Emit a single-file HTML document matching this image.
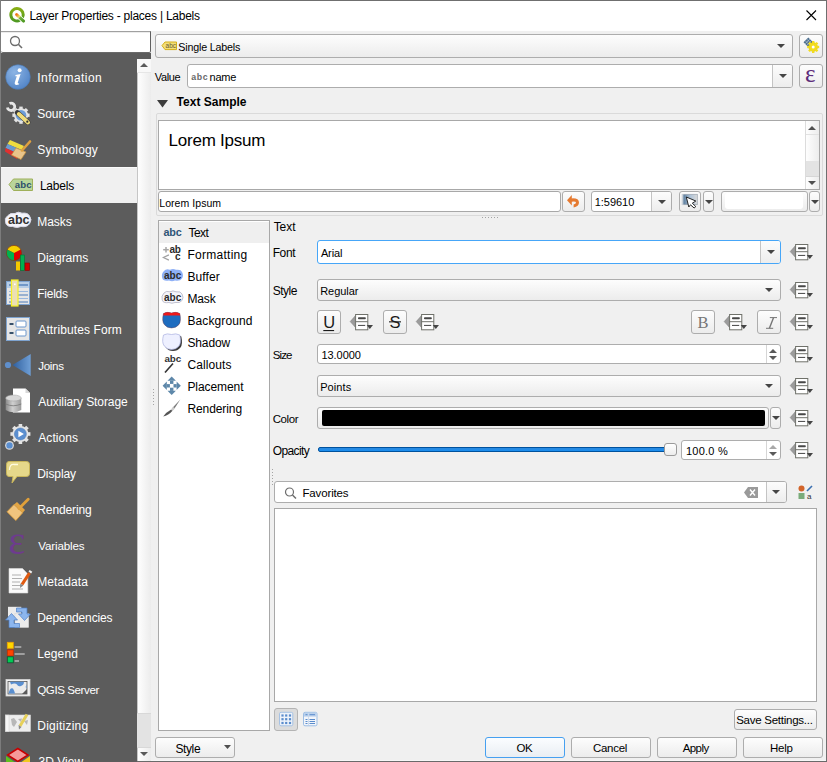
<!DOCTYPE html>
<html><head><meta charset="utf-8"><style>
html,body{margin:0;padding:0;}
body{width:827px;height:762px;position:relative;overflow:hidden;font-family:"Liberation Sans",sans-serif;background:#f0f0f0;}
.b{position:absolute;box-sizing:border-box;}
.t{position:absolute;line-height:1;white-space:nowrap;}
svg.b{overflow:visible;}
</style></head><body>
<div class="b" style="left:0px;top:0px;width:827px;height:762px;background:#f0f0f0;"></div>
<div class="b" style="left:0px;top:0px;width:827px;height:1px;background:#6f6f6f;"></div>
<div class="b" style="left:0px;top:0px;width:1px;height:762px;background:#7c7c7c;"></div>
<div class="b" style="left:826px;top:0px;width:1px;height:762px;background:#6f6f6f;"></div>
<div class="b" style="left:0px;top:761px;width:827px;height:1px;background:#6a6a6a;"></div>
<div class="b" style="left:1px;top:1px;width:825px;height:30px;background:#fff;"></div>
<svg class="b" style="left:6px;top:5px;" width="24" height="22" viewBox="0 0 24 22"><defs><linearGradient id="qg" x1="0" y1="0" x2="0" y2="1"><stop offset="0" stop-color="#86ad14"/><stop offset="1" stop-color="#4f9a22"/></linearGradient><linearGradient id="qt" x1="0" y1="0" x2="1" y2="1"><stop offset="0" stop-color="#f07818"/><stop offset="0.35" stop-color="#e8e070"/><stop offset="0.5" stop-color="#70b040"/><stop offset="1" stop-color="#4f9a22"/></linearGradient></defs><path d="M13.9 15.2 A6.2 6.2 0 1 1 16.4 12.8" fill="none" stroke="url(#qg)" stroke-width="3"/><line x1="12" y1="11" x2="17.6" y2="16.1" stroke="#fff" stroke-width="4.4" stroke-linecap="round"/><line x1="10.6" y1="9.6" x2="17.6" y2="16.1" stroke="url(#qt)" stroke-width="3" stroke-linecap="round"/></svg>
<div class="t" style="left:29.40px;top:9.94px;font-size:12px;color:#000;font-weight:normal;letter-spacing:-0.239px;">Layer Properties - places | Labels</div>
<svg class="b" style="left:806px;top:10px;" width="11" height="11" viewBox="0 0 11 11"><path d="M0.5 0.5 L10 10 M10 0.5 L0.5 10" stroke="#000" stroke-width="1.1"/></svg>
<div class="b" style="left:1px;top:31px;width:150px;height:22px;background:#fff;border-top:1px solid #a0a0a0;border-right:1px solid #606060;border-bottom:1px solid #6a6a6a;border-radius:0 0 2px 2px;"></div>
<div class="b" style="left:1px;top:32px;width:149px;height:1px;background:#ececec;"></div>
<svg class="b" style="left:8.6px;top:34.8px;" width="14" height="14" viewBox="0 0 14 14"><circle cx="6" cy="6" r="4.5" fill="none" stroke="#6d6d6d" stroke-width="1.3"/><line x1="9.3" y1="9.3" x2="13" y2="13" stroke="#6d6d6d" stroke-width="1.6"/></svg>
<div class="b" style="left:1px;top:53px;width:150px;height:709px;background:#5c5c5c;"></div>
<div class="b" style="left:137px;top:59px;width:14px;height:702px;background:linear-gradient(90deg,#fefefe,#ececec);border-left:1px solid #c6c6c6;"></div>
<div class="b" style="left:137px;top:59px;width:14px;height:14px;background:#f8f8f8;border-bottom:1px solid #e6e6e6;"></div>
<svg class="b" style="left:140.0px;top:63.0px;" width="8" height="4" viewBox="0 0 8 4"><polygon points="0,4 8,4 4.0,0" fill="#5a5a5a"/></svg>
<div class="b" style="left:137px;top:713px;width:14px;height:35px;background:#e3e3e3;border-top:1px solid #d8d8d8;border-bottom:1px solid #d8d8d8;"></div>
<svg class="b" style="left:140.0px;top:752.0px;" width="8" height="4" viewBox="0 0 8 4"><polygon points="0,0 8,0 4.0,4" fill="#5a5a5a"/></svg>
<div class="t" style="left:37.30px;top:71.64px;font-size:12px;color:#fff;font-weight:normal;letter-spacing:0.440px;">Information</div>
<div class="t" style="left:37.30px;top:107.64px;font-size:12px;color:#fff;font-weight:normal;letter-spacing:-0.080px;">Source</div>
<div class="t" style="left:37.30px;top:143.64px;font-size:12px;color:#fff;font-weight:normal;letter-spacing:0.138px;">Symbology</div>
<div class="b" style="left:1px;top:167px;width:136px;height:36px;background:#f0f0f0;border-top:1px solid #fafafa;"></div>
<div class="t" style="left:39.90px;top:179.64px;font-size:12px;color:#000;font-weight:normal;letter-spacing:-0.200px;">Labels</div>
<div class="t" style="left:37.30px;top:215.64px;font-size:12px;color:#fff;font-weight:normal;letter-spacing:-0.075px;">Masks</div>
<div class="t" style="left:37.30px;top:251.64px;font-size:12px;color:#fff;font-weight:normal;letter-spacing:-0.071px;">Diagrams</div>
<div class="t" style="left:37.30px;top:287.64px;font-size:12px;color:#fff;font-weight:normal;letter-spacing:-0.280px;">Fields</div>
<div class="t" style="left:38.30px;top:323.64px;font-size:12px;color:#fff;font-weight:normal;letter-spacing:0.107px;">Attributes Form</div>
<div class="t" style="left:38.30px;top:359.98px;font-size:11.6px;color:#fff;font-weight:normal;letter-spacing:-0.350px;">Joins</div>
<div class="t" style="left:38.30px;top:395.64px;font-size:12px;color:#fff;font-weight:normal;letter-spacing:-0.081px;">Auxiliary Storage</div>
<div class="t" style="left:38.30px;top:431.64px;font-size:12px;color:#fff;font-weight:normal;letter-spacing:0.067px;">Actions</div>
<div class="t" style="left:37.30px;top:467.64px;font-size:12px;color:#fff;font-weight:normal;letter-spacing:-0.100px;">Display</div>
<div class="t" style="left:37.30px;top:503.64px;font-size:12px;color:#fff;font-weight:normal;letter-spacing:-0.112px;">Rendering</div>
<div class="t" style="left:38.30px;top:539.98px;font-size:11.6px;color:#fff;font-weight:normal;letter-spacing:-0.162px;">Variables</div>
<div class="t" style="left:37.30px;top:575.64px;font-size:12px;color:#fff;font-weight:normal;letter-spacing:0.071px;">Metadata</div>
<div class="t" style="left:37.30px;top:611.64px;font-size:12px;color:#fff;font-weight:normal;letter-spacing:-0.127px;">Dependencies</div>
<div class="t" style="left:37.30px;top:647.64px;font-size:12px;color:#fff;font-weight:normal;letter-spacing:0.100px;">Legend</div>
<div class="t" style="left:37.30px;top:683.98px;font-size:11.6px;color:#fff;font-weight:normal;letter-spacing:-0.440px;">QGIS Server</div>
<div class="t" style="left:37.30px;top:719.64px;font-size:12px;color:#fff;font-weight:normal;letter-spacing:0.244px;">Digitizing</div>
<div class="t" style="left:38.60px;top:755.64px;font-size:12px;color:#fff;font-weight:normal;">3D View</div>
<svg class="b" style="left:5px;top:64px;" width="26" height="26" viewBox="0 0 26 26"><defs><radialGradient id="ig" cx="0.35" cy="0.3" r="0.8"><stop offset="0" stop-color="#8cb4e4"/><stop offset="1" stop-color="#4f82c6"/></radialGradient></defs>
    <circle cx="13" cy="13" r="12.3" fill="url(#ig)" stroke="#4a78b4" stroke-width="0.6"/>
    <circle cx="14.6" cy="6.2" r="2" fill="#fff"/>
    <path d="M10.5 11 L15.6 10 L12.8 18.6 Q12.5 19.8 14.2 19.2 L13.8 20.6 Q9 21.8 9.8 18.6 L11.8 12.2 L10.3 12.3 Z" fill="#fff"/></svg>
<svg class="b" style="left:5px;top:101px;" width="27" height="26" viewBox="0 0 27 26"><g transform="translate(16,14.2)">
      <circle r="7" fill="#e4e4e4"/><rect x="-1.7" y="-8.6" width="3.4" height="3" fill="#e4e4e4" transform="rotate(0)"/><rect x="-1.7" y="-8.6" width="3.4" height="3" fill="#e4e4e4" transform="rotate(45)"/><rect x="-1.7" y="-8.6" width="3.4" height="3" fill="#e4e4e4" transform="rotate(90)"/><rect x="-1.7" y="-8.6" width="3.4" height="3" fill="#e4e4e4" transform="rotate(135)"/><rect x="-1.7" y="-8.6" width="3.4" height="3" fill="#e4e4e4" transform="rotate(180)"/><rect x="-1.7" y="-8.6" width="3.4" height="3" fill="#e4e4e4" transform="rotate(225)"/><rect x="-1.7" y="-8.6" width="3.4" height="3" fill="#e4e4e4" transform="rotate(270)"/><rect x="-1.7" y="-8.6" width="3.4" height="3" fill="#e4e4e4" transform="rotate(315)"/>
      <circle r="5.3" fill="#6d9dd8"/></g>
      <path d="M4.5 2.4 A3.7 3.7 0 1 1 2.4 6.4" fill="none" stroke="#e6e6e6" stroke-width="2.8"/>
      <line x1="9" y1="9" x2="12" y2="12" stroke="#d6d6d6" stroke-width="3.4"/>
      <line x1="12.3" y1="11.6" x2="23" y2="21.4" stroke="#3a3a3a" stroke-width="5" stroke-linecap="round"/>
      <line x1="13.8" y1="13" x2="23" y2="21.4" stroke="#f0dc7a" stroke-width="4" stroke-linecap="round"/>
      <circle cx="22.3" cy="20.7" r="1.1" fill="#333"/></svg>
<svg class="b" style="left:4px;top:138px;" width="28" height="23" viewBox="0 0 28 23"><polygon points="6,2 20,8 17.5,12 3.5,6" fill="#f0dc40"/>
      <polygon points="3.5,6 17.5,12 15,16 1.5,10" fill="#6a9ad0"/>
      <polygon points="1.5,10 15,16 13,21 1,13.5" fill="#e03030"/>
      <polygon points="12,10 22,14 17,21.5 7.5,17" fill="#e9c48a" stroke="#c8903a" stroke-width="0.7"/>
      <line x1="18" y1="12.5" x2="26" y2="3.5" stroke="#dfa040" stroke-width="2.6" stroke-linecap="round"/></svg>
<svg class="b" style="left:8px;top:178px;" width="26" height="14" viewBox="0 0 26 14"><path d="M1 6.5 L5.5 1 L24.5 1 L24.5 12.5 L5.5 12.5 Z" fill="#b9d59a" stroke="#9fb05a" stroke-width="1"/>
      <text x="6.8" y="10.2" font-family="Liberation Sans" font-weight="bold" font-size="9.6" fill="#2c4e6c" letter-spacing="0.1">abc</text></svg>
<svg class="b" style="left:4px;top:211px;" width="29" height="18" viewBox="0 0 29 18"><path d="M4 4.5 Q6 1.8 11 2.5 Q14 0 18 2.2 Q24 1.5 25.5 5 Q28.5 8.5 25.5 12.8 Q23 16.5 17 15.5 Q13 17.5 8.5 15.5 Q2.5 16 1.5 11.5 Q0 7 4 4.5 Z" fill="#f4f4fa" stroke="#d8d8e6" stroke-width="1"/>
      <text x="4" y="13.3" font-family="Liberation Sans" font-weight="bold" font-size="12.5" fill="#333">abc</text></svg>
<svg class="b" style="left:5px;top:244px;" width="26" height="28" viewBox="0 0 26 28"><circle cx="9" cy="9" r="7.6" fill="#e00000"/>
      <path d="M9 9 L2.2 5.6 A7.6 7.6 0 0 1 15.8 5.6 Z" fill="#f5d000"/>
      <path d="M9 9 L9 16.6 A7.6 7.6 0 0 1 2.2 5.6 Z" fill="#00b050"/>
      <circle cx="9" cy="9" r="7.6" fill="none" stroke="#7a3a10" stroke-width="0.6"/>
      <rect x="11" y="17.5" width="4" height="9" fill="#f5c800"/>
      <rect x="15.5" y="11" width="4" height="15.5" fill="#00b050" stroke="#087030" stroke-width="0.6"/>
      <rect x="20" y="19" width="4.5" height="7.5" fill="#d00000" stroke="#8a0000" stroke-width="0.6"/></svg>
<svg class="b" style="left:5px;top:279px;" width="26" height="28" viewBox="0 0 26 28"><rect x="1.5" y="2.5" width="23" height="23" fill="#e6e6e6" stroke="#7ea3cf" stroke-width="1"/>
      <rect x="2" y="3" width="22" height="6" fill="#b7cde6"/>
      <line x1="4" y1="6" x2="23" y2="6" stroke="#4a7ab8" stroke-width="1.3"/>
      <line x1="4" y1="12.5" x2="23" y2="12.5" stroke="#9ab8de" stroke-width="1"/>
      <line x1="4" y1="16" x2="23" y2="16" stroke="#4a7ab8" stroke-width="1"/>
      <line x1="4" y1="19.5" x2="23" y2="19.5" stroke="#9ab8de" stroke-width="1"/>
      <line x1="4" y1="23" x2="23" y2="23" stroke="#4a7ab8" stroke-width="1"/>
      <rect x="6.5" y="1" width="6.5" height="26" fill="#ece0b4" stroke="#f6f020" stroke-width="1.2"/>
      <rect x="9" y="4.5" width="1.6" height="1.6" fill="#fff"/></svg>
<svg class="b" style="left:5px;top:316px;" width="26" height="26" viewBox="0 0 26 26"><rect x="1.5" y="1.5" width="23" height="23" fill="#e6e6e6" stroke="#7ea3cf" stroke-width="1"/>
      <rect x="4.5" y="7" width="4" height="2" fill="#37506a"/>
      <rect x="4.5" y="16" width="4" height="2" fill="#37506a"/>
      <rect x="11" y="5" width="10" height="6" rx="1" fill="#fff" stroke="#6a96cc" stroke-width="1"/>
      <rect x="11" y="14" width="10" height="6" rx="1" fill="#fff" stroke="#6a96cc" stroke-width="1"/></svg>
<svg class="b" style="left:4px;top:353px;" width="28" height="24" viewBox="0 0 28 24"><defs><linearGradient id="jg" x1="0" x2="1"><stop offset="0" stop-color="#2f5f9e"/><stop offset="1" stop-color="#6f9fd6"/></linearGradient></defs>
      <circle cx="4" cy="12" r="3.1" fill="#5f8fcc"/>
      <polygon points="8.5,12 26.7,1 26.7,23" fill="url(#jg)"/></svg>
<svg class="b" style="left:5px;top:388px;" width="26" height="26" viewBox="0 0 26 26"><path d="M8 0.5 L20.5 0.5 L25 5 L25 24.5 L8 24.5 Z" fill="#fff"/>
      <path d="M20.5 0.5 L20.5 5 L25 5 Z" fill="#d8d8d8"/>
      <defs><linearGradient id="dbg" x1="0" x2="1"><stop offset="0" stop-color="#8a8a8a"/><stop offset="0.45" stop-color="#d0d0d0"/><stop offset="1" stop-color="#9a9a9a"/></linearGradient></defs>
      <path d="M0.7 10 L0.7 22 Q8 26.5 16.3 22 L16.3 10 Z" fill="url(#dbg)"/>
      <ellipse cx="8.5" cy="10" rx="7.8" ry="3" fill="#d8d8d8" stroke="#a0a0a0" stroke-width="0.5"/>
      <path d="M0.7 16 Q8 19.5 16.3 16" fill="none" stroke="#777" stroke-width="0.8"/></svg>
<svg class="b" style="left:4px;top:422px;" width="27" height="28" viewBox="0 0 27 28"><g transform="translate(16.4,12)">
      <circle r="8" fill="#e4e4e4"/><rect x="-1.8" y="-10" width="3.6" height="3.5" fill="#e4e4e4" transform="rotate(0)"/><rect x="-1.8" y="-10" width="3.6" height="3.5" fill="#e4e4e4" transform="rotate(45)"/><rect x="-1.8" y="-10" width="3.6" height="3.5" fill="#e4e4e4" transform="rotate(90)"/><rect x="-1.8" y="-10" width="3.6" height="3.5" fill="#e4e4e4" transform="rotate(135)"/><rect x="-1.8" y="-10" width="3.6" height="3.5" fill="#e4e4e4" transform="rotate(180)"/><rect x="-1.8" y="-10" width="3.6" height="3.5" fill="#e4e4e4" transform="rotate(225)"/><rect x="-1.8" y="-10" width="3.6" height="3.5" fill="#e4e4e4" transform="rotate(270)"/><rect x="-1.8" y="-10" width="3.6" height="3.5" fill="#e4e4e4" transform="rotate(315)"/>
      <circle r="6" fill="#5b8fd0" stroke="#4a78b4" stroke-width="0.5"/>
      <polygon points="-2,-3.2 3.5,0 -2,3.2" fill="#fff"/></g>
      <g transform="translate(5.5,23.4)"><circle r="4.4" fill="#dcdcdc"/><circle r="3.2" fill="#5b8fd0"/></g></svg>
<svg class="b" style="left:5px;top:460px;" width="26" height="25" viewBox="0 0 26 25"><path d="M4 1.5 L21.5 1.5 Q24.5 1.5 24.5 4.5 L24.5 13.5 Q24.5 16.5 21.5 16.5 L12 16.5 L7 23 L8 16.5 L4 16.5 Q1.5 16.5 1.5 13.5 L1.5 4.5 Q1.5 1.5 4 1.5 Z" fill="#e6d88a" stroke="#c9b65a" stroke-width="1"/>
      <path d="M4.5 10 Q4.5 4 9 4.5 L13 4.5" fill="none" stroke="#fffbe0" stroke-width="1.3"/></svg>
<svg class="b" style="left:5px;top:497px;" width="26" height="26" viewBox="0 0 26 26"><polygon points="2,14.8 9,7.5 17.7,15.8 10.8,23.6" fill="#f0c47e" stroke="#d89a3a" stroke-width="0.8"/>
      <line x1="14" y1="11.5" x2="23.2" y2="2.2" stroke="#e0a03a" stroke-width="2.8" stroke-linecap="round"/>
      <polygon points="9,7.5 12,5 20,13 17.7,15.8" fill="#e3a544"/></svg>
<div class="t" style="left:8.60px;top:521.44px;font-size:40px;color:#6e3b8e;font-weight:normal;font-family:'Liberation Serif';">&#949;</div>
<svg class="b" style="left:7px;top:567px;" width="25" height="28" viewBox="0 0 25 28"><path d="M2 1.5 L15.5 1.5 L20.8 7 L20.8 26 L2 26 Z" fill="#fafafa" stroke="#dcdcdc" stroke-width="0.6"/>
      <g stroke="#b0b0b0" stroke-width="1"><line x1="5" y1="8" x2="14" y2="8"/><line x1="5" y1="11.5" x2="15" y2="11.5"/><line x1="5" y1="15" x2="13" y2="15"/><line x1="5" y1="18.5" x2="16" y2="18.5"/><line x1="5" y1="22" x2="16" y2="22"/></g>
      <line x1="22.5" y1="6" x2="15" y2="17.5" stroke="#e05a10" stroke-width="3.2"/>
      <polygon points="13.3,16.5 16.4,18.5 13,21" fill="#888"/>
      <line x1="22.8" y1="5.5" x2="24" y2="3.8" stroke="#f0f0f0" stroke-width="3.2"/></svg>
<svg class="b" style="left:4px;top:605px;" width="27" height="25" viewBox="0 0 27 25"><rect x="4" y="1.8" width="13.3" height="13.2" fill="#ececec"/>
      <rect x="10.9" y="8.7" width="13.8" height="13.8" fill="#ececec" stroke="#d4d4d4" stroke-width="0.5"/>
      <polygon points="12.5,3 23,3 23,9 26.5,9 20.5,15.5 14.5,9 18,9 18,7 12.5,7" fill="#8cb6ee" stroke="#4f7fc4" stroke-width="0.7"/>
      <polygon points="15.5,22.5 5,22.5 5,15 1.5,15 7.5,8.5 13.5,15 10,15 10,18.5 15.5,18.5" fill="#8cb6ee" stroke="#4f7fc4" stroke-width="0.7"/></svg>
<svg class="b" style="left:6px;top:641px;" width="22" height="24" viewBox="0 0 22 24"><rect x="1.3" y="1.3" width="6" height="6" fill="#ffd800" stroke="#f0a000" stroke-width="0.8"/>
      <rect x="1.3" y="8.9" width="6" height="6" fill="#ff4400" stroke="#c03000" stroke-width="0.8"/>
      <rect x="1.3" y="15.8" width="6" height="6" fill="#00cc55" stroke="#105030" stroke-width="0.8"/>
      <g stroke="#a8a8a8" stroke-width="1.8"><line x1="8.6" y1="6" x2="15.3" y2="6"/><line x1="8.6" y1="13" x2="18.7" y2="13"/><line x1="8.6" y1="20" x2="13" y2="20"/></g></svg>
<svg class="b" style="left:5px;top:678px;" width="26" height="19" viewBox="0 0 26 19"><rect x="1" y="1.5" width="24" height="16.5" fill="#f2f2f2" stroke="#d4d4d4" stroke-width="0.8"/>
      <rect x="3" y="3.5" width="19" height="12.5" fill="#ececec" stroke="#555" stroke-width="0.8"/>
      <path d="M5 3.8 L19 3.8 Q19 7 16 8 Q13 9 12 6.5 Q10 4.5 6 6.5 Z" fill="#5a8fd0"/>
      <path d="M3.5 15.5 Q5 9 8 10.5 Q9.5 13 10 15.5 Z" fill="#5a8fd0"/>
      <path d="M21.5 6 Q20 9 21.5 11 Z" fill="#5a8fd0"/>
      <polygon points="17,16 22,11 22,16" fill="#5a5a5a"/></svg>
<svg class="b" style="left:5px;top:713px;" width="26" height="20" viewBox="0 0 26 20"><rect x="0.5" y="2" width="25" height="16.5" fill="#eeeeee" stroke="#d8d8d8" stroke-width="0.6"/>
      <rect x="0.5" y="2" width="3.5" height="16.5" fill="#f6f6f6" stroke="#d0d0d0" stroke-width="0.5"/>
      <path d="M6 6 L9 5 L12 9 L9 14 L7 12 Z M13 6 L17 5.5 L16 9 Z M19 8 L23 7 L22 12 Z" fill="#b8b8b8"/>
      <line x1="22" y1="1.5" x2="15" y2="13" stroke="#e6d05a" stroke-width="3"/>
      <polygon points="13.5,12 16.5,14 14,16.5" fill="#888"/></svg>
<svg class="b" style="left:4px;top:747px;" width="28" height="15" viewBox="0 0 28 15"><polygon points="2,9 10.5,15 2,15" fill="#60c020"/>
      <polygon points="26,9 17.5,15 26,15" fill="#f0c820"/>
      <polygon points="13.8,1.5 24,8 13.8,14.5 3.6,8" fill="#f59a9a" stroke="#c80000" stroke-width="1.5"/></svg>
<div class="b" style="left:155px;top:34px;width:638px;height:24px;border:1px solid #adadad;border-radius:3px;background:linear-gradient(#fdfdfd,#ececec);"></div>
<svg class="b" style="left:777.0px;top:44.0px;" width="8" height="4" viewBox="0 0 8 4"><polygon points="0,0 8,0 4.0,4" fill="#454545"/></svg>
<div class="t" style="left:178.30px;top:42.34px;font-size:10.7px;color:#000;font-weight:normal;letter-spacing:-0.175px;">Single Labels</div>
<div class="b" style="left:799px;top:34px;width:24px;height:24px;border:1px solid #adadad;border-radius:3px;background:linear-gradient(#fdfdfd,#ececec);"></div>
<div class="t" style="left:154.80px;top:72.09px;font-size:11px;color:#000;font-weight:normal;letter-spacing:-0.400px;">Value</div>
<div class="b" style="left:187px;top:64px;width:606px;height:24px;border:1px solid #adadad;border-radius:3px;background:#fff;"></div>
<div class="b" style="left:773px;top:65px;width:19px;height:22px;background:linear-gradient(#fcfcfc,#ededed);border-radius:0 2px 2px 0;"></div>
<div class="b" style="left:772px;top:65px;width:1px;height:22px;background:#c4c4c4;"></div>
<svg class="b" style="left:778.5px;top:74.0px;" width="8" height="4" viewBox="0 0 8 4"><polygon points="0,0 8,0 4.0,4" fill="#454545"/></svg>
<div class="t" style="left:209.50px;top:72.09px;font-size:11px;color:#000;font-weight:normal;letter-spacing:-0.200px;">name</div>
<div class="b" style="left:799px;top:64px;width:24px;height:24px;border:1px solid #adadad;border-radius:3px;background:linear-gradient(#fdfdfd,#ececec);"></div>
<svg class="b" style="left:157px;top:100px;" width="12" height="8" viewBox="0 0 12 8"><polygon points="0,0 11,0 5.5,7.5" fill="#3c3c3c"/></svg>
<div class="t" style="left:176.60px;top:96.44px;font-size:12px;color:#000;font-weight:bold;letter-spacing:0.010px;">Text Sample</div>
<div class="b" style="left:156px;top:113px;width:667px;height:103px;border:1px solid #dadada;border-radius:2px;"></div>
<div class="b" style="left:158px;top:120px;width:662px;height:70px;background:#fff;border:1px solid #a8a8a8;"></div>
<div class="b" style="left:805px;top:121px;width:14px;height:68px;background:linear-gradient(90deg,#fefefe,#ececec);border-left:1px solid #dcdcdc;"></div>
<div class="b" style="left:806px;top:134px;width:13px;height:1px;background:#e2e2e2;"></div>
<div class="b" style="left:806px;top:161px;width:13px;height:15px;background:#e3e3e3;"></div>
<div class="b" style="left:806px;top:176px;width:13px;height:1px;background:#d6d6d6;"></div>
<svg class="b" style="left:808.3px;top:125.5px;" width="8" height="4" viewBox="0 0 8 4"><polygon points="0,4 8,4 4.0,0" fill="#505050"/></svg>
<svg class="b" style="left:808.3px;top:180.5px;" width="8" height="4" viewBox="0 0 8 4"><polygon points="0,0 8,0 4.0,4" fill="#505050"/></svg>
<div class="t" style="left:168.50px;top:132.41px;font-size:17px;color:#000;font-weight:normal;letter-spacing:-0.220px;">Lorem Ipsum</div>
<div class="b" style="left:158px;top:191px;width:403px;height:21px;background:#fff;border:1px solid #a8a8a8;border-radius:3px;"></div>
<div class="t" style="left:159.30px;top:197.71px;font-size:10.5px;color:#000;font-weight:normal;letter-spacing:0.050px;">Lorem Ipsum</div>
<div class="b" style="left:562px;top:191px;width:23px;height:21px;border:1px solid #adadad;border-radius:3px;background:linear-gradient(#fdfdfd,#ececec);"></div>
<div class="b" style="left:591px;top:191px;width:81px;height:21px;border:1px solid #adadad;border-radius:3px;background:#fff;"></div>
<div class="b" style="left:652px;top:192px;width:19px;height:19px;background:linear-gradient(#fcfcfc,#ededed);border-radius:0 2px 2px 0;"></div>
<div class="b" style="left:651px;top:192px;width:1px;height:19px;background:#c4c4c4;"></div>
<svg class="b" style="left:657.5px;top:199.5px;" width="8" height="4" viewBox="0 0 8 4"><polygon points="0,0 8,0 4.0,4" fill="#454545"/></svg>
<div class="t" style="left:594.80px;top:197.49px;font-size:11px;color:#000;font-weight:normal;letter-spacing:-0.050px;">1:59610</div>
<div class="b" style="left:679px;top:191px;width:22px;height:21px;border:1px solid #adadad;border-radius:3px;background:linear-gradient(#fdfdfd,#ececec);"></div>
<div class="b" style="left:703px;top:191px;width:11px;height:21px;border:1px solid #adadad;border-radius:3px;background:linear-gradient(#fdfdfd,#ececec);"></div>
<svg class="b" style="left:704.5px;top:199.5px;" width="8" height="4" viewBox="0 0 8 4"><polygon points="0,0 8,0 4.0,4" fill="#454545"/></svg>
<div class="b" style="left:721px;top:191px;width:87px;height:21px;border:1px solid #adadad;border-radius:3px;background:linear-gradient(#fdfdfd,#ececec);"></div>
<div class="b" style="left:725px;top:193px;width:78px;height:16px;background:#fff;border-radius:3px;"></div>
<div class="b" style="left:809px;top:191px;width:11px;height:21px;border:1px solid #adadad;border-radius:3px;background:linear-gradient(#fdfdfd,#ececec);"></div>
<svg class="b" style="left:810.5px;top:199.5px;" width="8" height="4" viewBox="0 0 8 4"><polygon points="0,0 8,0 4.0,4" fill="#454545"/></svg>
<div class="b" style="left:158px;top:220px;width:112px;height:511px;background:#fff;border:1px solid #a8a8a8;"></div>
<div class="b" style="left:159px;top:222px;width:110px;height:21px;background:#efefef;"></div>
<div class="t" style="left:188.40px;top:226.64px;font-size:12px;color:#000;font-weight:normal;letter-spacing:-0.500px;">Text</div>
<div class="t" style="left:187.40px;top:248.64px;font-size:12px;color:#000;font-weight:normal;letter-spacing:0.278px;">Formatting</div>
<div class="t" style="left:187.40px;top:270.64px;font-size:12px;color:#000;font-weight:normal;letter-spacing:0.100px;">Buffer</div>
<div class="t" style="left:187.40px;top:292.64px;font-size:12px;color:#000;font-weight:normal;letter-spacing:-0.133px;">Mask</div>
<div class="t" style="left:187.40px;top:314.64px;font-size:12px;color:#000;font-weight:normal;letter-spacing:0.111px;">Background</div>
<div class="t" style="left:187.40px;top:336.64px;font-size:12px;color:#000;font-weight:normal;letter-spacing:-0.100px;">Shadow</div>
<div class="t" style="left:187.40px;top:358.64px;font-size:12px;color:#000;font-weight:normal;letter-spacing:0.114px;">Callouts</div>
<div class="t" style="left:187.40px;top:380.64px;font-size:12px;color:#000;font-weight:normal;letter-spacing:-0.075px;">Placement</div>
<div class="t" style="left:187.40px;top:402.64px;font-size:12px;color:#000;font-weight:normal;letter-spacing:-0.088px;">Rendering</div>
<div class="t" style="left:163.50px;top:227.16px;font-size:10.8px;color:#2f5577;font-weight:bold;letter-spacing:-0.2px;">abc</div>
<svg class="b" style="left:162px;top:243px;" width="20" height="19" viewBox="0 0 20 19"><g stroke="#a6a6a6" stroke-width="1.5"><line x1="1.2" y1="6.7" x2="6.8" y2="6.7"/><line x1="4" y1="3.9" x2="4" y2="9.6"/></g>
      <path d="M6.9 11.9 L1.4 14.5 L6.9 17.1" fill="none" stroke="#a0a0a0" stroke-width="1.2"/>
      <text x="7.6" y="9.8" font-family="Liberation Sans" font-weight="bold" font-size="10" letter-spacing="-0.3" fill="#2a2a2a">ab</text>
      <text x="13.1" y="17.2" font-family="Liberation Sans" font-weight="bold" font-size="10" fill="#2a2a2a">c</text></svg>
<svg class="b" style="left:161px;top:268px;" width="23" height="15" viewBox="0 0 23 15"><path d="M3 3 Q5 0.5 9 1.8 Q12 0 15 1.8 Q20 1 21 4 Q23 7.5 21 10.5 Q19 13.5 14 12.5 Q11 14 8 12.5 Q2 13.5 1.2 10 Q0 6 3 3 Z" fill="#8eb0f6"/>
      <text x="3" y="10.8" font-family="Liberation Sans" font-weight="bold" font-size="10" fill="#2a2a2a">abc</text></svg>
<svg class="b" style="left:161px;top:290px;" width="23" height="15" viewBox="0 0 23 15"><path d="M3 3 Q5 0.5 9 1.8 Q12 0 15 1.8 Q20 1 21 4 Q23 7.5 21 10.5 Q19 13.5 14 12.5 Q11 14 8 12.5 Q2 13.5 1.2 10 Q0 6 3 3 Z" fill="#f4f4fa" stroke="#b4b4c4" stroke-width="0.8"/>
      <text x="3" y="10.8" font-family="Liberation Sans" font-weight="bold" font-size="10" fill="#2a2a2a">abc</text></svg>
<svg class="b" style="left:162px;top:311px;" width="20" height="18" viewBox="0 0 20 18"><path d="M1.5 2.5 Q5 0.5 9.5 2 Q14 0.5 17.8 2.5 Q19.5 10 17 13.5 Q14 17 9.5 17 Q5 17 2.3 13.5 Q-0.5 10 1.5 2.5 Z" fill="#1e6cbf" stroke="#6a3040" stroke-width="0.4"/>
      <path d="M1.5 2.5 Q5 0.5 9.5 2 Q14 0.5 17.8 2.5 L18.2 4.6 L1.3 4.6 Z" fill="#f01818"/></svg>
<svg class="b" style="left:162px;top:333px;" width="21" height="18" viewBox="0 0 21 18"><path d="M3 3.5 Q6.5 1.5 11 3 Q15.5 1.5 19.3 3.5 Q21 11 18.5 14.5 Q15.5 18 11 18 Q6.5 18 3.8 14.5 Q1 11 3 3.5 Z" fill="#3a3a3a"/>
      <path d="M1.5 2 Q5 0 9.5 1.5 Q14 0 17.8 2 Q19.5 9.5 17 13 Q14 16.5 9.5 16.5 Q5 16.5 2.3 13 Q-0.5 9.5 1.5 2 Z" fill="#eef0ff" stroke="#aab0e0" stroke-width="0.7"/></svg>
<div class="t" style="left:164.50px;top:353.80px;font-size:9.8px;color:#333;font-weight:bold;letter-spacing:-0.1px;">abc</div>
<svg class="b" style="left:163px;top:362px;" width="12" height="12" viewBox="0 0 12 12"><line x1="2" y1="10.5" x2="10" y2="1.5" stroke="#333" stroke-width="1.6"/></svg>
<svg class="b" style="left:162px;top:376px;" width="20" height="20" viewBox="0 0 20 20"><g fill="#5d87a9">
      <polygon points="9.7,0.6 13.9,4.8 5.5,4.8"/><rect x="8" y="4.7" width="3.4" height="3.2"/>
      <polygon points="9.7,19 13.9,14.8 5.5,14.8"/><rect x="8" y="11.7" width="3.4" height="3.2"/>
      <polygon points="0.6,9.8 4.8,5.6 4.8,14"/><rect x="4.7" y="8.1" width="3.2" height="3.4"/>
      <polygon points="18.8,9.8 14.6,5.6 14.6,14"/><rect x="11.5" y="8.1" width="3.2" height="3.4"/></g></svg>
<svg class="b" style="left:162px;top:399px;" width="20" height="19" viewBox="0 0 20 19"><path d="M18.3 0.6 L12.5 9.5 L10.8 8.5 Z" fill="#7a7a7a"/>
      <path d="M12.8 9 Q12 11 10.5 11.8 L8.8 10.8 Q10 9 10.8 8 Z" fill="#c8c8c8"/>
      <path d="M10.5 11.8 Q6.5 16.5 1.2 17.6 Q4.5 13 8.8 10.8 Z" fill="#555"/></svg>
<div class="t" style="left:273.70px;top:221.34px;font-size:12px;color:#000;font-weight:normal;letter-spacing:-0.067px;">Text</div>
<div class="t" style="left:272.70px;top:247.34px;font-size:12px;color:#000;font-weight:normal;letter-spacing:-0.400px;">Font</div>
<div class="t" style="left:272.70px;top:285.44px;font-size:12px;color:#000;font-weight:normal;letter-spacing:-0.475px;">Style</div>
<div class="t" style="left:272.70px;top:349.97px;font-size:11.5px;color:#000;font-weight:normal;letter-spacing:-0.867px;">Size</div>
<div class="t" style="left:272.70px;top:413.97px;font-size:11.5px;color:#000;font-weight:normal;letter-spacing:-0.425px;">Color</div>
<div class="t" style="left:272.70px;top:445.44px;font-size:12px;color:#000;font-weight:normal;letter-spacing:-0.617px;">Opacity</div>
<div class="b" style="left:317px;top:240px;width:464px;height:24px;border:1px solid #46a6f8;border-radius:3px;background:#fff;"></div>
<div class="b" style="left:761px;top:241px;width:19px;height:22px;background:linear-gradient(#fcfcfc,#ededed);border-radius:0 2px 2px 0;"></div>
<div class="b" style="left:760px;top:241px;width:1px;height:22px;background:#c4c4c4;"></div>
<svg class="b" style="left:766.5px;top:250.0px;" width="8" height="4" viewBox="0 0 8 4"><polygon points="0,0 8,0 4.0,4" fill="#454545"/></svg>
<div class="t" style="left:320.90px;top:248.19px;font-size:11px;color:#000;font-weight:normal;letter-spacing:-0.125px;">Arial</div>
<div class="b" style="left:317px;top:279px;width:464px;height:22px;border:1px solid #adadad;border-radius:3px;background:linear-gradient(#fdfdfd,#ececec);"></div>
<svg class="b" style="left:765.0px;top:288.0px;" width="8" height="4" viewBox="0 0 8 4"><polygon points="0,0 8,0 4.0,4" fill="#454545"/></svg>
<div class="t" style="left:320.20px;top:286.49px;font-size:11px;color:#000;font-weight:normal;letter-spacing:-0.033px;">Regular</div>
<div class="b" style="left:317px;top:310px;width:24px;height:24px;border:1px solid #adadad;border-radius:3px;background:linear-gradient(#fdfdfd,#ececec);"></div>
<div class="b" style="left:383px;top:310px;width:24px;height:24px;border:1px solid #adadad;border-radius:3px;background:linear-gradient(#fdfdfd,#ececec);"></div>
<div class="b" style="left:691px;top:310px;width:24px;height:24px;border:1px solid #adadad;border-radius:3px;background:linear-gradient(#fdfdfd,#ececec);"></div>
<div class="b" style="left:757px;top:310px;width:24px;height:24px;border:1px solid #adadad;border-radius:3px;background:linear-gradient(#fdfdfd,#ececec);"></div>
<svg class="b" style="left:317px;top:310px;" width="24" height="24" viewBox="0 0 24 24"><text x="6.2" y="17.6" font-family="Liberation Sans" font-size="16.5" fill="#1a1a1a">U</text><rect x="6.3" y="20" width="10.8" height="1.1" fill="#1a1a1a"/></svg>
<svg class="b" style="left:383px;top:310px;" width="24" height="24" viewBox="0 0 24 24"><text x="6.6" y="17.9" font-family="Liberation Sans" font-size="16.5" fill="#1a1a1a">S</text><rect x="6" y="11.3" width="12" height="1.1" fill="#1a1a1a"/></svg>
<svg class="b" style="left:691px;top:310px;" width="24" height="24" viewBox="0 0 24 24"><text x="6.5" y="18.2" font-family="Liberation Serif" font-size="16.5" fill="#767676">B</text></svg>
<svg class="b" style="left:757px;top:310px;" width="24" height="24" viewBox="0 0 24 24"><g stroke="#767676" fill="none"><line x1="12.8" y1="7.6" x2="20" y2="7.6" stroke-width="1"/><line x1="9" y1="18.3" x2="16.2" y2="18.3" stroke-width="1"/><line x1="16.6" y1="7.6" x2="12.4" y2="18.3" stroke-width="1.4"/></g></svg>
<svg class="b" style="left:790px;top:244px;" width="24" height="17" viewBox="0 0 24 17"><polygon points="0.2,7.6 5.3,1.8 5.3,13.2" fill="#9c9c9c" stroke="#7a7a7a" stroke-width="0.5"/><rect x="5.6" y="0.5" width="12.2" height="15.3" fill="#fff" stroke="#6f716a" stroke-width="1"/><line x1="5.6" y1="7.7" x2="17.8" y2="7.7" stroke="#6f716a" stroke-width="1"/><rect x="8" y="3.2" width="7.8" height="2" rx="0.8" fill="#474747"/><rect x="8" y="10.9" width="7.2" height="1.1" fill="#555"/><polygon points="16.7,11 23,11 19.8,15" fill="#454545"/></svg>
<svg class="b" style="left:790px;top:282px;" width="24" height="17" viewBox="0 0 24 17"><polygon points="0.2,7.6 5.3,1.8 5.3,13.2" fill="#9c9c9c" stroke="#7a7a7a" stroke-width="0.5"/><rect x="5.6" y="0.5" width="12.2" height="15.3" fill="#fff" stroke="#6f716a" stroke-width="1"/><line x1="5.6" y1="7.7" x2="17.8" y2="7.7" stroke="#6f716a" stroke-width="1"/><rect x="8" y="3.2" width="7.8" height="2" rx="0.8" fill="#474747"/><rect x="8" y="10.9" width="7.2" height="1.1" fill="#555"/><polygon points="16.7,11 23,11 19.8,15" fill="#454545"/></svg>
<svg class="b" style="left:790px;top:314px;" width="24" height="17" viewBox="0 0 24 17"><polygon points="0.2,7.6 5.3,1.8 5.3,13.2" fill="#9c9c9c" stroke="#7a7a7a" stroke-width="0.5"/><rect x="5.6" y="0.5" width="12.2" height="15.3" fill="#fff" stroke="#6f716a" stroke-width="1"/><line x1="5.6" y1="7.7" x2="17.8" y2="7.7" stroke="#6f716a" stroke-width="1"/><rect x="8" y="3.2" width="7.8" height="2" rx="0.8" fill="#474747"/><rect x="8" y="10.9" width="7.2" height="1.1" fill="#555"/><polygon points="16.7,11 23,11 19.8,15" fill="#454545"/></svg>
<svg class="b" style="left:790px;top:346px;" width="24" height="17" viewBox="0 0 24 17"><polygon points="0.2,7.6 5.3,1.8 5.3,13.2" fill="#9c9c9c" stroke="#7a7a7a" stroke-width="0.5"/><rect x="5.6" y="0.5" width="12.2" height="15.3" fill="#fff" stroke="#6f716a" stroke-width="1"/><line x1="5.6" y1="7.7" x2="17.8" y2="7.7" stroke="#6f716a" stroke-width="1"/><rect x="8" y="3.2" width="7.8" height="2" rx="0.8" fill="#474747"/><rect x="8" y="10.9" width="7.2" height="1.1" fill="#555"/><polygon points="16.7,11 23,11 19.8,15" fill="#454545"/></svg>
<svg class="b" style="left:790px;top:378px;" width="24" height="17" viewBox="0 0 24 17"><polygon points="0.2,7.6 5.3,1.8 5.3,13.2" fill="#9c9c9c" stroke="#7a7a7a" stroke-width="0.5"/><rect x="5.6" y="0.5" width="12.2" height="15.3" fill="#fff" stroke="#6f716a" stroke-width="1"/><line x1="5.6" y1="7.7" x2="17.8" y2="7.7" stroke="#6f716a" stroke-width="1"/><rect x="8" y="3.2" width="7.8" height="2" rx="0.8" fill="#474747"/><rect x="8" y="10.9" width="7.2" height="1.1" fill="#555"/><polygon points="16.7,11 23,11 19.8,15" fill="#454545"/></svg>
<svg class="b" style="left:790px;top:410px;" width="24" height="17" viewBox="0 0 24 17"><polygon points="0.2,7.6 5.3,1.8 5.3,13.2" fill="#9c9c9c" stroke="#7a7a7a" stroke-width="0.5"/><rect x="5.6" y="0.5" width="12.2" height="15.3" fill="#fff" stroke="#6f716a" stroke-width="1"/><line x1="5.6" y1="7.7" x2="17.8" y2="7.7" stroke="#6f716a" stroke-width="1"/><rect x="8" y="3.2" width="7.8" height="2" rx="0.8" fill="#474747"/><rect x="8" y="10.9" width="7.2" height="1.1" fill="#555"/><polygon points="16.7,11 23,11 19.8,15" fill="#454545"/></svg>
<svg class="b" style="left:790px;top:442px;" width="24" height="17" viewBox="0 0 24 17"><polygon points="0.2,7.6 5.3,1.8 5.3,13.2" fill="#9c9c9c" stroke="#7a7a7a" stroke-width="0.5"/><rect x="5.6" y="0.5" width="12.2" height="15.3" fill="#fff" stroke="#6f716a" stroke-width="1"/><line x1="5.6" y1="7.7" x2="17.8" y2="7.7" stroke="#6f716a" stroke-width="1"/><rect x="8" y="3.2" width="7.8" height="2" rx="0.8" fill="#474747"/><rect x="8" y="10.9" width="7.2" height="1.1" fill="#555"/><polygon points="16.7,11 23,11 19.8,15" fill="#454545"/></svg>
<svg class="b" style="left:350px;top:314px;" width="24" height="17" viewBox="0 0 24 17"><polygon points="0.2,7.6 5.3,1.8 5.3,13.2" fill="#9c9c9c" stroke="#7a7a7a" stroke-width="0.5"/><rect x="5.6" y="0.5" width="12.2" height="15.3" fill="#fff" stroke="#6f716a" stroke-width="1"/><line x1="5.6" y1="7.7" x2="17.8" y2="7.7" stroke="#6f716a" stroke-width="1"/><rect x="8" y="3.2" width="7.8" height="2" rx="0.8" fill="#474747"/><rect x="8" y="10.9" width="7.2" height="1.1" fill="#555"/><polygon points="16.7,11 23,11 19.8,15" fill="#454545"/></svg>
<svg class="b" style="left:416px;top:314px;" width="24" height="17" viewBox="0 0 24 17"><polygon points="0.2,7.6 5.3,1.8 5.3,13.2" fill="#9c9c9c" stroke="#7a7a7a" stroke-width="0.5"/><rect x="5.6" y="0.5" width="12.2" height="15.3" fill="#fff" stroke="#6f716a" stroke-width="1"/><line x1="5.6" y1="7.7" x2="17.8" y2="7.7" stroke="#6f716a" stroke-width="1"/><rect x="8" y="3.2" width="7.8" height="2" rx="0.8" fill="#474747"/><rect x="8" y="10.9" width="7.2" height="1.1" fill="#555"/><polygon points="16.7,11 23,11 19.8,15" fill="#454545"/></svg>
<svg class="b" style="left:724px;top:314px;" width="24" height="17" viewBox="0 0 24 17"><polygon points="0.2,7.6 5.3,1.8 5.3,13.2" fill="#9c9c9c" stroke="#7a7a7a" stroke-width="0.5"/><rect x="5.6" y="0.5" width="12.2" height="15.3" fill="#fff" stroke="#6f716a" stroke-width="1"/><line x1="5.6" y1="7.7" x2="17.8" y2="7.7" stroke="#6f716a" stroke-width="1"/><rect x="8" y="3.2" width="7.8" height="2" rx="0.8" fill="#474747"/><rect x="8" y="10.9" width="7.2" height="1.1" fill="#555"/><polygon points="16.7,11 23,11 19.8,15" fill="#454545"/></svg>
<div class="b" style="left:317px;top:344px;width:464px;height:20px;background:#fff;border:1px solid #adadad;border-radius:3px;"></div>
<div class="b" style="left:766px;top:345px;width:1px;height:18px;background:#d6d6d6;"></div>
<svg class="b" style="left:769.0px;top:349.4px;" width="8" height="4" viewBox="0 0 8 4"><polygon points="0,4 8,4 4.0,0" fill="#5a5a5a"/></svg>
<svg class="b" style="left:769.0px;top:356.0px;" width="8" height="4" viewBox="0 0 8 4"><polygon points="0,0 8,0 4.0,4" fill="#5a5a5a"/></svg>
<div class="t" style="left:321.50px;top:349.89px;font-size:11px;color:#000;font-weight:normal;letter-spacing:-0.067px;">13.0000</div>
<div class="b" style="left:317px;top:375px;width:464px;height:22px;border:1px solid #adadad;border-radius:3px;background:linear-gradient(#fdfdfd,#ececec);"></div>
<svg class="b" style="left:765.0px;top:384.0px;" width="8" height="4" viewBox="0 0 8 4"><polygon points="0,0 8,0 4.0,4" fill="#454545"/></svg>
<div class="t" style="left:320.20px;top:382.49px;font-size:11px;color:#000;font-weight:normal;letter-spacing:0.080px;">Points</div>
<div class="b" style="left:317px;top:407px;width:452px;height:22px;border:1px solid #adadad;border-radius:3px;background:linear-gradient(#fdfdfd,#ececec);"></div>
<div class="b" style="left:322px;top:410px;width:443px;height:16px;background:#000;border-radius:2px;"></div>
<div class="b" style="left:770px;top:407px;width:11px;height:22px;border:1px solid #adadad;border-radius:3px;background:linear-gradient(#fdfdfd,#ececec);"></div>
<svg class="b" style="left:771.5px;top:416.0px;" width="8" height="4" viewBox="0 0 8 4"><polygon points="0,0 8,0 4.0,4" fill="#454545"/></svg>
<div class="b" style="left:318px;top:447px;width:350px;height:5px;background:linear-gradient(#2a88de,#1a8ef0);border:1px solid #00529e;border-radius:2px;"></div>
<div class="b" style="left:664px;top:443px;width:13px;height:13px;background:linear-gradient(#fff,#ececec);border:1px solid #9a9a9a;border-radius:3px;"></div>
<div class="b" style="left:681px;top:440px;width:100px;height:20px;background:#fff;border:1px solid #adadad;border-radius:3px;"></div>
<div class="b" style="left:766px;top:441px;width:1px;height:18px;background:#d6d6d6;"></div>
<svg class="b" style="left:769.0px;top:444.8px;" width="8" height="4" viewBox="0 0 8 4"><polygon points="0,4 8,4 4.0,0" fill="#a8a8a8"/></svg>
<svg class="b" style="left:769.0px;top:451.5px;" width="8" height="4" viewBox="0 0 8 4"><polygon points="0,0 8,0 4.0,4" fill="#5a5a5a"/></svg>
<div class="t" style="left:686.00px;top:446.49px;font-size:11px;color:#000;font-weight:normal;letter-spacing:0.233px;">100.0 %</div>
<div class="b" style="left:274px;top:481px;width:513px;height:22px;background:#fff;border:1px solid #adadad;border-radius:3px;"></div>
<div class="b" style="left:767px;top:482px;width:19px;height:20px;background:linear-gradient(#fcfcfc,#ededed);border-radius:0 2px 2px 0;"></div>
<div class="b" style="left:766px;top:482px;width:1px;height:20px;background:#c4c4c4;"></div>
<svg class="b" style="left:772.0px;top:490.0px;" width="8" height="4" viewBox="0 0 8 4"><polygon points="0,0 8,0 4.0,4" fill="#454545"/></svg>
<svg class="b" style="left:284px;top:487px;" width="14" height="12" viewBox="0 0 14 12"><circle cx="5.5" cy="5" r="4" fill="none" stroke="#6d6d6d" stroke-width="1.2"/><line x1="8.5" y1="8" x2="12" y2="11.5" stroke="#6d6d6d" stroke-width="1.5"/></svg>
<div class="t" style="left:302.50px;top:487.67px;font-size:11.5px;color:#000;font-weight:normal;letter-spacing:-0.150px;">Favorites</div>
<svg class="b" style="left:744px;top:487px;" width="14" height="11" viewBox="0 0 14 11"><polygon points="0,5.5 4,0 14,0 14,11 4,11" fill="#9a9a9a"/><path d="M6 2.5 L11 8.5 M11 2.5 L6 8.5" stroke="#fff" stroke-width="1.4"/></svg>
<svg class="b" style="left:798px;top:485px;" width="15" height="14" viewBox="0 0 15 14"><circle cx="3.5" cy="3.5" r="3" fill="#d2642a"/><rect x="0.5" y="8" width="6" height="6" fill="#7aab7a"/><line x1="9" y1="6" x2="14" y2="1" stroke="#3a6fb0" stroke-width="1.6"/><text x="9" y="13.5" font-size="8" font-family="Liberation Sans" fill="#333">a</text></svg>
<div class="b" style="left:274px;top:508px;width:543px;height:194px;background:#fff;border:1px solid #a8a8a8;"></div>
<div class="b" style="left:274px;top:708px;width:24px;height:23px;background:#dcdcdc;border:1px solid #b4b4b4;border-radius:3px;"></div>
<div class="b" style="left:734px;top:709px;width:83px;height:21px;border:1px solid #adadad;border-radius:3px;background:linear-gradient(#fdfdfd,#ececec);"></div>
<div class="t" style="left:736.20px;top:715.07px;font-size:11.5px;color:#000;font-weight:normal;letter-spacing:-0.260px;">Save Settings...</div>
<div class="b" style="left:155px;top:737px;width:80px;height:21px;border:1px solid #adadad;border-radius:3px;background:linear-gradient(#fdfdfd,#ececec);"></div>
<div class="t" style="left:175.40px;top:743.04px;font-size:12px;color:#000;font-weight:normal;letter-spacing:-0.375px;">Style</div>
<svg class="b" style="left:224.0px;top:745.0px;" width="7" height="4" viewBox="0 0 7 4"><polygon points="0,0 7,0 3.5,4" fill="#505050"/></svg>
<div class="b" style="left:485px;top:737px;width:80px;height:21px;border:1px solid #46a0f0;border-radius:3px;background:linear-gradient(#fbfdff,#e9eef3);"></div>
<div class="t" style="left:516.60px;top:743.47px;font-size:11.5px;color:#000;font-weight:normal;letter-spacing:-0.500px;">OK</div>
<div class="b" style="left:571px;top:737px;width:80px;height:21px;border:1px solid #adadad;border-radius:3px;background:linear-gradient(#fdfdfd,#ececec);"></div>
<div class="t" style="left:593.00px;top:743.47px;font-size:11.5px;color:#000;font-weight:normal;letter-spacing:-0.300px;">Cancel</div>
<div class="b" style="left:657px;top:737px;width:80px;height:21px;border:1px solid #adadad;border-radius:3px;background:linear-gradient(#fdfdfd,#ececec);"></div>
<div class="t" style="left:682.70px;top:743.47px;font-size:11.5px;color:#000;font-weight:normal;letter-spacing:-0.575px;">Apply</div>
<div class="b" style="left:743px;top:737px;width:80px;height:21px;border:1px solid #adadad;border-radius:3px;background:linear-gradient(#fdfdfd,#ececec);"></div>
<div class="t" style="left:769.90px;top:743.47px;font-size:11.5px;color:#000;font-weight:normal;letter-spacing:-0.233px;">Help</div>
<div class="b" style="left:137px;top:761px;width:690px;height:1px;background:#6a6a6a;"></div>
<div class="b" style="left:151px;top:760px;width:675px;height:1px;background:#f7f7f7;"></div>
<div class="b" style="left:0px;top:0px;width:1px;height:762px;background:#7c7c7c;"></div>
<div class="b" style="left:482px;top:217px;width:1px;height:1px;background:#a4a4a4;"></div>
<div class="b" style="left:153px;top:389px;width:1px;height:1px;background:#a4a4a4;"></div>
<div class="b" style="left:272px;top:469px;width:1px;height:1px;background:#a4a4a4;"></div>
<div class="b" style="left:485px;top:217px;width:1px;height:1px;background:#a4a4a4;"></div>
<div class="b" style="left:153px;top:392px;width:1px;height:1px;background:#a4a4a4;"></div>
<div class="b" style="left:272px;top:472px;width:1px;height:1px;background:#a4a4a4;"></div>
<div class="b" style="left:488px;top:217px;width:1px;height:1px;background:#a4a4a4;"></div>
<div class="b" style="left:153px;top:395px;width:1px;height:1px;background:#a4a4a4;"></div>
<div class="b" style="left:272px;top:475px;width:1px;height:1px;background:#a4a4a4;"></div>
<div class="b" style="left:491px;top:217px;width:1px;height:1px;background:#a4a4a4;"></div>
<div class="b" style="left:153px;top:398px;width:1px;height:1px;background:#a4a4a4;"></div>
<div class="b" style="left:272px;top:478px;width:1px;height:1px;background:#a4a4a4;"></div>
<div class="b" style="left:494px;top:217px;width:1px;height:1px;background:#a4a4a4;"></div>
<div class="b" style="left:153px;top:401px;width:1px;height:1px;background:#a4a4a4;"></div>
<div class="b" style="left:272px;top:481px;width:1px;height:1px;background:#a4a4a4;"></div>
<div class="b" style="left:497px;top:217px;width:1px;height:1px;background:#a4a4a4;"></div>
<div class="b" style="left:153px;top:404px;width:1px;height:1px;background:#a4a4a4;"></div>
<div class="b" style="left:272px;top:484px;width:1px;height:1px;background:#a4a4a4;"></div>
<svg class="b" style="left:161px;top:41px;" width="17" height="10" viewBox="0 0 17 10"><path d="M1 4.6 L4 1 L15.5 1 L15.5 8.6 L4 8.6 Z" fill="#f3df78" stroke="#d5af1a" stroke-width="1"/>
      <text x="4.6" y="7.4" font-family="Liberation Sans" font-size="6.5" fill="#6a5a30">abc</text></svg>
<svg class="b" style="left:802px;top:36px;" width="19" height="19" viewBox="0 0 19 19"><g transform="translate(6.3,6.2) rotate(45)"><rect x="-3.4" y="-3.4" width="6.8" height="6.8" fill="#4d6f8f"/>
      <g stroke="#cfdbe6" stroke-width="0.5"><line x1="-1.1" y1="-3.4" x2="-1.1" y2="3.4"/><line x1="1.1" y1="-3.4" x2="1.1" y2="3.4"/><line x1="-3.4" y1="-1.1" x2="3.4" y2="-1.1"/><line x1="-3.4" y1="1.1" x2="3.4" y2="1.1"/></g></g>
      <g transform="translate(11.2,11)"><circle r="4.4" fill="#f2dc1e" stroke="#c8b000" stroke-width="0.4"/><rect x="-1.2" y="-6" width="2.4" height="2.4" fill="#f2dc1e" transform="rotate(0)"/><rect x="-1.2" y="-6" width="2.4" height="2.4" fill="#f2dc1e" transform="rotate(45)"/><rect x="-1.2" y="-6" width="2.4" height="2.4" fill="#f2dc1e" transform="rotate(90)"/><rect x="-1.2" y="-6" width="2.4" height="2.4" fill="#f2dc1e" transform="rotate(135)"/><rect x="-1.2" y="-6" width="2.4" height="2.4" fill="#f2dc1e" transform="rotate(180)"/><rect x="-1.2" y="-6" width="2.4" height="2.4" fill="#f2dc1e" transform="rotate(225)"/><rect x="-1.2" y="-6" width="2.4" height="2.4" fill="#f2dc1e" transform="rotate(270)"/><rect x="-1.2" y="-6" width="2.4" height="2.4" fill="#f2dc1e" transform="rotate(315)"/><circle r="1.5" fill="#fff"/></g></svg>
<div class="t" style="left:191.20px;top:72.75px;font-size:8.8px;color:#686868;font-weight:bold;letter-spacing:0.6px;">abc</div>
<svg class="b" style="left:803px;top:66px;" width="18" height="20" viewBox="0 0 18 20"><text x="2" y="16" font-family="Liberation Serif" font-size="25" fill="#5d2c7a">&#949;</text></svg>
<svg class="b" style="left:562px;top:190px;" width="23" height="22" viewBox="0 0 23 22"><path d="M5 10.3 L9.8 5 L9.8 8.4 Q17 8 17 12.6 Q17 16.6 11.6 17.5 L11.6 14.6 Q14 14.2 14 12.6 Q14 11.2 9.8 11.7 L9.8 15.6 Z" fill="#e57a30"/></svg>
<svg class="b" style="left:681px;top:193px;" width="18" height="17" viewBox="0 0 18 17"><defs><linearGradient id="mtg" x1="0" x2="1"><stop offset="0" stop-color="#4f7396"/><stop offset="0.55" stop-color="#b0c4d8"/><stop offset="1" stop-color="#dadada"/></linearGradient></defs>
      <rect x="1.3" y="1.3" width="15" height="10.4" fill="url(#mtg)" stroke="#9aa4ae" stroke-width="0.7"/>
      <rect x="0.8" y="1" width="1.6" height="11" fill="#c8d0d8"/>
      <path d="M5.3 4 L7.8 14 L9.5 11.8 L13.1 15 L14.8 13.6 L11.3 10.2 L14.8 8 Z" fill="#fff" stroke="#111" stroke-width="0.9" stroke-linejoin="round"/></svg>
<svg class="b" style="left:278px;top:711px;" width="16" height="16" viewBox="0 0 16 16"><rect x="1.5" y="1.3" width="13.3" height="13.5" rx="1.5" fill="#eef3fa" stroke="#a6c2e4" stroke-width="1"/><rect x="3.4" y="3.4" width="2.2" height="2.2" fill="#5a8ccc"/><rect x="3.4" y="7.1" width="2.2" height="2.2" fill="#5a8ccc"/><rect x="3.4" y="10.9" width="2.2" height="2.2" fill="#5a8ccc"/><rect x="7.1" y="3.4" width="2.2" height="2.2" fill="#5a8ccc"/><rect x="7.1" y="7.1" width="2.2" height="2.2" fill="#5a8ccc"/><rect x="7.1" y="10.9" width="2.2" height="2.2" fill="#5a8ccc"/><rect x="10.9" y="3.4" width="2.2" height="2.2" fill="#5a8ccc"/><rect x="10.9" y="7.1" width="2.2" height="2.2" fill="#5a8ccc"/><rect x="10.9" y="10.9" width="2.2" height="2.2" fill="#5a8ccc"/></svg>
<svg class="b" style="left:302px;top:711px;" width="16" height="16" viewBox="0 0 16 16"><rect x="1.5" y="1.3" width="13.5" height="13.5" rx="1.5" fill="#f2f5fa" stroke="#9cbde4" stroke-width="1"/>
      <rect x="2" y="1.8" width="12.5" height="3.8" fill="#b9d0ec"/>
      <g stroke="#5a8ccc" stroke-width="1"><line x1="3.5" y1="3.7" x2="5.5" y2="3.7"/><line x1="7.5" y1="3.7" x2="13" y2="3.7"/>
      <line x1="3.5" y1="8.5" x2="5.5" y2="8.5"/><line x1="7.5" y1="8.5" x2="13" y2="8.5"/>
      <line x1="3.5" y1="10.5" x2="5.5" y2="10.5"/><line x1="7.5" y1="10.5" x2="13" y2="10.5"/>
      <line x1="3.5" y1="12.5" x2="5.5" y2="12.5"/><line x1="7.5" y1="12.5" x2="13" y2="12.5"/></g>
      <line x1="6.5" y1="2" x2="6.5" y2="14" stroke="#c8d8ec" stroke-width="0.8"/></svg>
</body></html>
